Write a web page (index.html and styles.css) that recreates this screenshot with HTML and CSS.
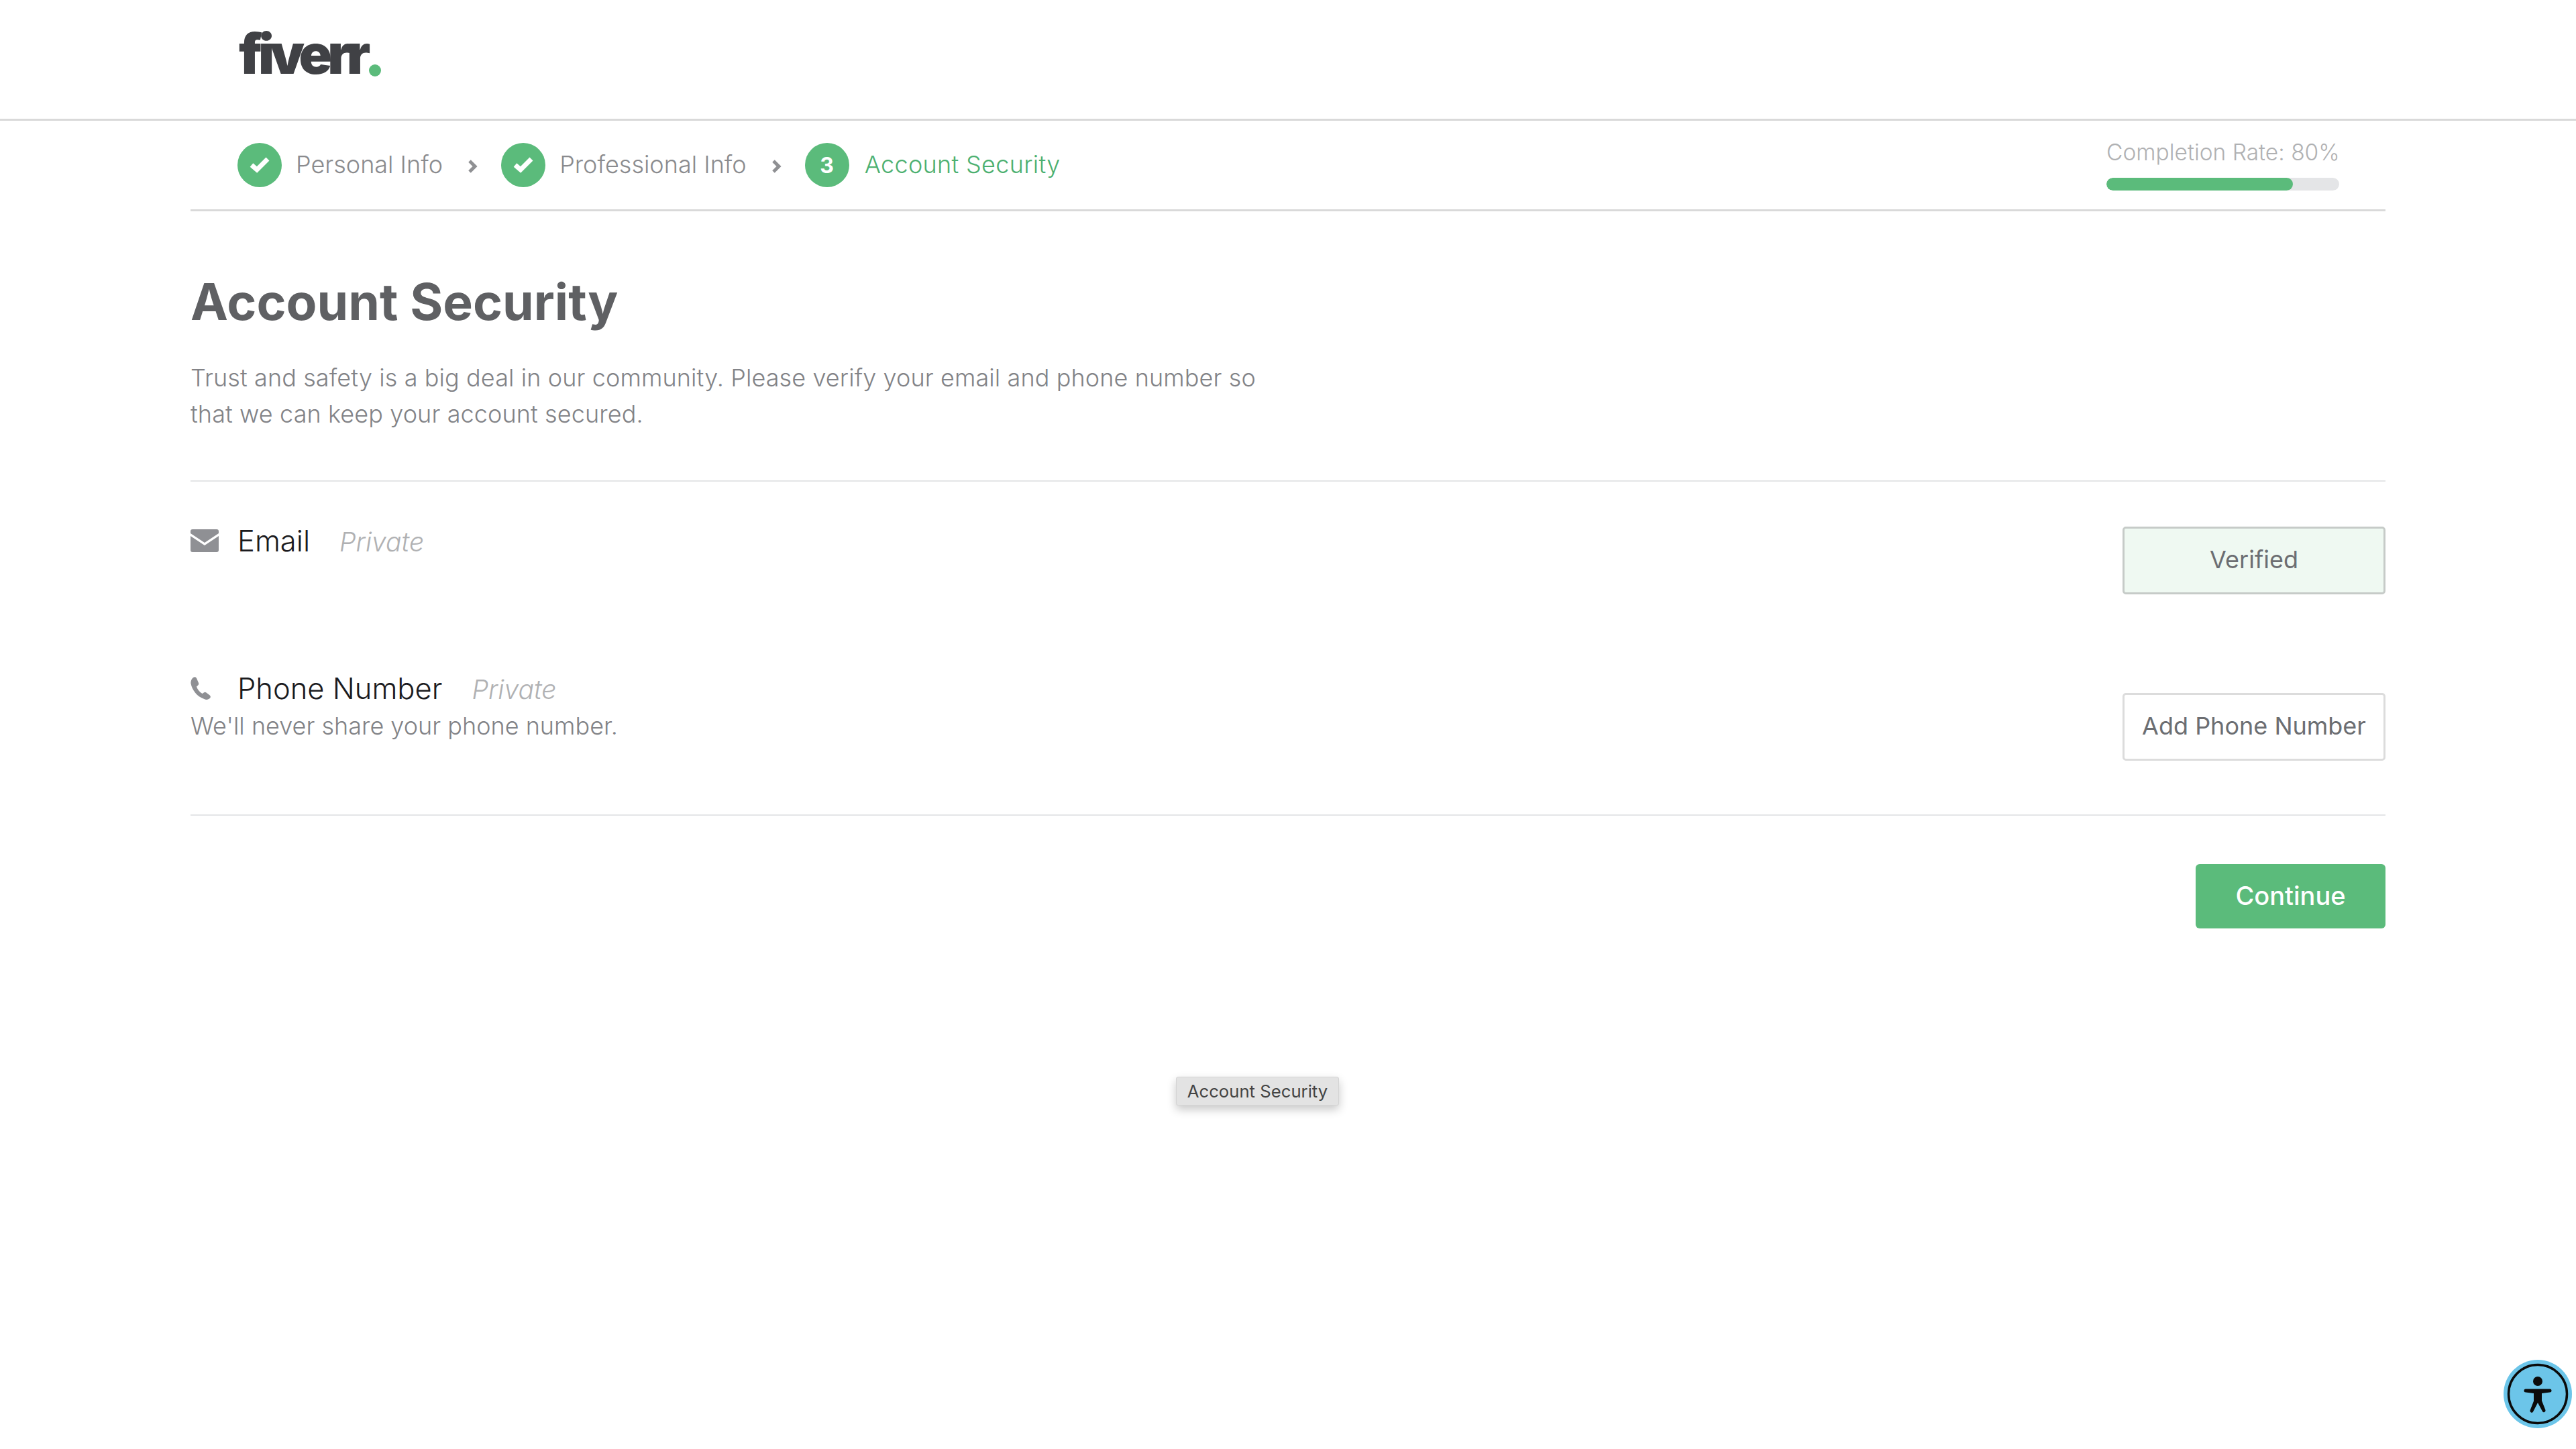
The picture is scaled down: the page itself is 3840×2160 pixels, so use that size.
FILE: index.html
```html
<!DOCTYPE html>
<html lang="en">
<head>
<meta charset="utf-8">
<title>Account Security</title>
<link rel="stylesheet" href="styles.css">
</head>
<body>
<header class="topbar">
  <div class="logo">fiverr<span class="logo-dot"></span></div>
</header>
<main class="page">
  <nav class="steps">
    <ol class="step-list">
      <li class="step">
        <span class="step-badge"><svg viewBox="0 0 66 66" class="check"><path d="M21 33l8 7 16-16" /></svg></span>
        <span class="step-label">Personal Info</span>
        <svg class="chev" viewBox="0 0 15 20"><path d="M3 2l8 8-8 8" /></svg>
      </li>
      <li class="step">
        <span class="step-badge"><svg viewBox="0 0 66 66" class="check"><path d="M21 33l8 7 16-16" /></svg></span>
        <span class="step-label">Professional Info</span>
        <svg class="chev" viewBox="0 0 15 20"><path d="M3 2l8 8-8 8" /></svg>
      </li>
      <li class="step">
        <span class="step-badge step-badge-num">3</span>
        <span class="step-label step-label-active">Account Security</span>
      </li>
    </ol>
    <div class="completion">
      <div class="completion-text">Completion Rate: 80%</div>
      <div class="bar"><div class="bar-fill" style="width:80%"></div></div>
    </div>
  </nav>

  <section class="intro">
    <h1 class="title">Account Security</h1>
    <p class="lede">Trust and safety is a big deal in our community. Please verify your email and phone number so that we can keep your account secured.</p>
  </section>

  <section class="rows">
    <div class="row row-email">
      <div class="row-info">
        <div class="row-head">
          <svg class="row-icon" viewBox="0 0 42 34"><path class="icon-fill" d="M3 0h36a3 3 0 0 1 3 3v3L21 20 0 6V3a3 3 0 0 1 3-3zM0 10l21 14 21-14v21a3 3 0 0 1-3 3H3a3 3 0 0 1-3-3z"/></svg>
          <span class="row-name">Email</span>
          <span class="row-private">Private</span>
        </div>
      </div>
      <button class="btn btn-verified">Verified</button>
    </div>
    <div class="row row-phone">
      <div class="row-info">
        <div class="row-head">
          <svg class="row-icon" viewBox="0 0 42 34"><path class="icon-fill" d="M4 1c2-1.500 4-1 5 1l3 7c.6 1.500.2 2.800-1 3.800l-2 1.700c1.500 4.500 4.500 8 8.500 10.500l2.300-1.600c1.200-.8 2.500-.8 3.700.1l5 3.700c1.700 1.300 1.800 3.300.4 4.600-2.500 2.400-5.400 2.700-8.500 1.300C9.500 29 2.500 20 .5 10 0 6.500 1.500 3 4 1z"/></svg>
          <span class="row-name">Phone Number</span>
          <span class="row-private">Private</span>
        </div>
        <p class="row-note">We'll never share your phone number.</p>
      </div>
      <button class="btn btn-add">Add Phone Number</button>
    </div>
  </section>

  <div class="actions">
    <button class="btn-primary">Continue</button>
  </div>
</main>

<div class="tooltip">Account Security</div>

<button class="a11y" aria-label="Accessibility">
  <svg viewBox="0 0 102 102">
    <circle class="a11y-disc" cx="51" cy="51" r="51"/>
    <circle class="a11y-ring" cx="51" cy="51" r="43.500"/>
    <circle class="a11y-fig" cx="51" cy="32" r="7"/>
    <path class="a11y-fig" d="M33 43.500h36a2.500 2.500 0 0 1 0 5l-12 1.500v11l5.500 14a2.500 2.500 0 0 1-4.500 2L51 64l-7 13.500a2.500 2.500 0 0 1-4.500-2L45 61.500V50l-12-1.500a2.500 2.500 0 0 1 0-5z"/>
  </svg>
</button>
</body>
</html>
```
FILE: styles.css
```css
* { box-sizing: border-box; }
html, body { margin: 0; padding: 0; }
body {
  width: 3840px;
  height: 2160px;
  overflow: hidden;
  background: #fff;
  font-family: Inter, "Liberation Sans", sans-serif;
  color: #62646a;
  position: relative;
}

.topbar {
  height: 180px;
  border-bottom: 3px solid #d9d9d9;
  padding: 48px 0 0 356px;
}
.logo {
  display: flex;
  align-items: flex-end;
  height: 66px;
  font-family: Inter, sans-serif;
  font-weight: 900;
  font-size: 82px;
  line-height: 66px;
  letter-spacing: -7px;
  color: #404145;
}
.logo-dot {
  width: 18px;
  height: 18px;
  border-radius: 50%;
  background: #5bbb7b;
  margin: 0 0 0 5px;
}

.page { padding: 0 284px; }

.steps {
  height: 135px;
  border-bottom: 3px solid #d9d9d9;
  display: flex;
  justify-content: space-between;
  padding: 0 69px 0 70px;
}
.step-list {
  list-style: none;
  margin: 0;
  padding: 33px 0 0;
  display: flex;
  align-items: flex-start;
  gap: 35px;
}
.step { display: flex; align-items: center; height: 66px; }
.step-badge {
  width: 66px;
  height: 66px;
  border-radius: 50%;
  background: #5bbb7b;
  color: #fff;
  font-size: 32px;
  font-weight: 700;
  display: flex;
  align-items: center;
  justify-content: center;
}
.check { width: 66px; height: 66px; }
.check path { fill: none; stroke: #fff; stroke-width: 7; }
.step-label {
  margin-left: 21px;
  margin-top: -2px;
  font-size: 36px;
  font-weight: 300;
  color: #8a8b8e;
  white-space: nowrap;
}
.step-label-active { color: #4cb070; letter-spacing: .3px; margin-left: 23px; }
.chev { width: 15px; height: 20px; margin-left: 37px; margin-top: 4px; }
.chev path { fill: none; stroke: #8f9093; stroke-width: 5; }

.completion { width: 347px; padding-top: 29px; }
.completion-text {
  font-size: 33.500px;
  font-weight: 300;
  line-height: 36px;
  color: #b0b1b3;
  white-space: nowrap;
}
.bar {
  margin-top: 20px;
  height: 19px;
  border-radius: 10px;
  background: #e4e5e7;
  overflow: hidden;
}
.bar-fill { height: 100%; border-radius: 10px; background: #5bbb7b; }

.intro { padding-top: 91px; height: 403px; border-bottom: 2px solid #e4e5e7; }
.title {
  margin: 0;
  font-size: 75px;
  line-height: 88px;
  font-weight: 700;
  color: #5f6063;
}
.lede {
  margin: 42px 0 0;
  width: 1620px;
  font-size: 36px;
  line-height: 54px;
  font-weight: 300;
  letter-spacing: .1px;
  color: #828387;
}

.rows { height: 498px; border-bottom: 2px solid #e4e5e7; }
.row { display: flex; justify-content: space-between; align-items: flex-start; }
.row-email { padding-top: 61px; height: 281px; }
.row-head { display: flex; align-items: center; height: 54px; }
.row-icon { width: 42px; height: 34px; margin-right: 28px; flex: none; }
.icon-fill { fill: #8f9094; }
.row-name { font-size: 43.500px; font-weight: 300; color: #1b1b1e; white-space: nowrap; }
.row-private {
  margin-left: 44px;
  margin-top: 3px;
  font-size: 39px;
  font-weight: 300;
  font-style: italic;
  color: #b0b1b3;
}
.row-note {
  margin: 2px 0 0;
  font-size: 36px;
  line-height: 54px;
  font-weight: 300;
  color: #828387;
}
.btn {
  width: 392px;
  height: 101px;
  border: 3px solid #dcdcdc;
  border-radius: 5px;
  background: #fff;
  color: #6c6e72;
  font-family: Inter, sans-serif;
  font-size: 36px;
  font-weight: 400;
  padding: 0 0 3px;
}
.btn-verified { background: #eff9f2; border-color: #c6cbc8; margin-top: 6px; }
.btn-add { margin-top: 34px; }

.actions { display: flex; justify-content: flex-end; padding-top: 72px; }
.btn-primary {
  width: 283px;
  height: 96px;
  border: 0;
  border-radius: 6px;
  background: #5bbb7b;
  color: #fff;
  font-family: Inter, sans-serif;
  font-size: 38px;
  font-weight: 500;
  padding: 0 0 2px;
}

.tooltip {
  position: absolute;
  left: 1753px;
  top: 1605px;
  width: 243px;
  height: 43px;
  display: flex;
  align-items: center;
  justify-content: center;
  background: #e3e3e3;
  border: 1px solid #d4d4d4;
  border-radius: 3px;
  box-shadow: 0 6px 14px rgba(0,0,0,.22);
  font-family: Inter, sans-serif;
  font-size: 25.700px;
  color: #444;
}

.a11y {
  position: absolute;
  left: 3732px;
  top: 2027px;
  width: 102px;
  height: 102px;
  padding: 0;
  border: 0;
  background: none;
}
.a11y svg { display: block; width: 102px; height: 102px; }
.a11y-disc { fill: #6cc5e9; }
.a11y-ring { fill: none; stroke: #0b0b0b; stroke-width: 3.500; }
.a11y-fig { fill: #0b0b0b; }
```
